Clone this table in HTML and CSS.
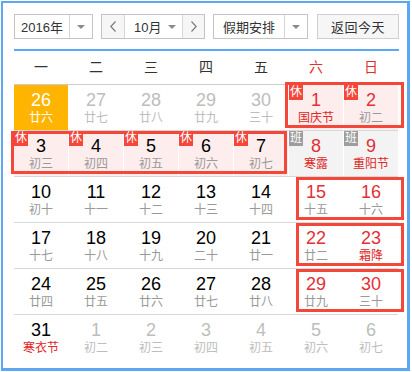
FILE: index.html
```html
<!DOCTYPE html>
<html lang="zh-CN">
<head>
<meta charset="utf-8">
<title>万年历</title>
<link rel="stylesheet" href="styles.css">
</head>
<body>
<div class="cal">
  <div class="toolbar">
    <div class="select year">
      <span class="sel-text">2016年</span>
      <span class="sel-arrow"><i class="tri"></i></span>
    </div>
    <div class="month-group">
      <span class="nav prev"><svg width="6" height="11" viewBox="0 0 6 11"><path d="M5.5 0.5 L0.8 5.5 L5.5 10.5" fill="none" stroke="#777" stroke-width="1.1"/></svg></span>
      <span class="month"><span class="month-text">10月</span><i class="tri"></i></span>
      <span class="nav next"><svg width="6" height="11" viewBox="0 0 6 11"><path d="M0.5 0.5 L5.2 5.5 L0.5 10.5" fill="none" stroke="#777" stroke-width="1.1"/></svg></span>
    </div>
    <div class="select holiday">
      <span class="sel-text">假期安排</span>
      <span class="sel-arrow"><i class="tri"></i></span>
    </div>
    <span class="today-btn">返回今天</span>
  </div>
  <div class="divider"></div>
  <div class="week-head">
    <span>一</span><span>二</span><span>三</span><span>四</span><span>五</span><span class="wk">六</span><span class="wk">日</span>
  </div>
  <div class="week">
    <div class="day today"><span class="num">26</span><span class="lunar">廿六</span></div>
    <div class="day other"><span class="num">27</span><span class="lunar">廿七</span></div>
    <div class="day other"><span class="num">28</span><span class="lunar">廿八</span></div>
    <div class="day other"><span class="num">29</span><span class="lunar">廿九</span></div>
    <div class="day other"><span class="num">30</span><span class="lunar">三十</span></div>
    <div class="grp g1">
      <div class="day rest red"><i class="badge">休</i><span class="num">1</span><span class="lunar fest">国庆节</span></div>
      <div class="day rest red"><i class="badge">休</i><span class="num">2</span><span class="lunar">初二</span></div>
    </div>
  </div>
  <div class="week">
    <div class="grp g2">
      <div class="day rest"><i class="badge">休</i><span class="num">3</span><span class="lunar">初三</span></div>
      <div class="day rest"><i class="badge">休</i><span class="num">4</span><span class="lunar">初四</span></div>
      <div class="day rest"><i class="badge">休</i><span class="num">5</span><span class="lunar">初五</span></div>
      <div class="day rest"><i class="badge">休</i><span class="num">6</span><span class="lunar">初六</span></div>
      <div class="day rest"><i class="badge">休</i><span class="num">7</span><span class="lunar">初七</span></div>
    </div>
    <div class="day work red"><i class="badge gray">班</i><span class="num">8</span><span class="lunar fest">寒露</span></div>
    <div class="day work red"><i class="badge gray">班</i><span class="num">9</span><span class="lunar fest">重阳节</span></div>
  </div>
  <div class="week">
    <div class="day"><span class="num">10</span><span class="lunar">初十</span></div>
    <div class="day"><span class="num">11</span><span class="lunar">十一</span></div>
    <div class="day"><span class="num">12</span><span class="lunar">十二</span></div>
    <div class="day"><span class="num">13</span><span class="lunar">十三</span></div>
    <div class="day"><span class="num">14</span><span class="lunar">十四</span></div>
    <div class="grp g3">
      <div class="day red"><span class="num">15</span><span class="lunar">十五</span></div>
      <div class="day red"><span class="num">16</span><span class="lunar">十六</span></div>
    </div>
  </div>
  <div class="week">
    <div class="day"><span class="num">17</span><span class="lunar">十七</span></div>
    <div class="day"><span class="num">18</span><span class="lunar">十八</span></div>
    <div class="day"><span class="num">19</span><span class="lunar">十九</span></div>
    <div class="day"><span class="num">20</span><span class="lunar">二十</span></div>
    <div class="day"><span class="num">21</span><span class="lunar">廿一</span></div>
    <div class="grp g3">
      <div class="day red"><span class="num">22</span><span class="lunar">廿二</span></div>
      <div class="day red"><span class="num">23</span><span class="lunar fest">霜降</span></div>
    </div>
  </div>
  <div class="week">
    <div class="day"><span class="num">24</span><span class="lunar">廿四</span></div>
    <div class="day"><span class="num">25</span><span class="lunar">廿五</span></div>
    <div class="day"><span class="num">26</span><span class="lunar">廿六</span></div>
    <div class="day"><span class="num">27</span><span class="lunar">廿七</span></div>
    <div class="day"><span class="num">28</span><span class="lunar">廿八</span></div>
    <div class="grp g3">
      <div class="day red"><span class="num">29</span><span class="lunar">廿九</span></div>
      <div class="day red"><span class="num">30</span><span class="lunar">三十</span></div>
    </div>
  </div>
  <div class="week last">
    <div class="day"><span class="num">31</span><span class="lunar fest">寒衣节</span></div>
    <div class="day other"><span class="num">1</span><span class="lunar">初二</span></div>
    <div class="day other"><span class="num">2</span><span class="lunar">初三</span></div>
    <div class="day other"><span class="num">3</span><span class="lunar">初四</span></div>
    <div class="day other"><span class="num">4</span><span class="lunar">初五</span></div>
    <div class="day other"><span class="num">5</span><span class="lunar">初六</span></div>
    <div class="day other"><span class="num">6</span><span class="lunar">初七</span></div>
  </div>
</div>
</body>
</html>
```

FILE: styles.css
```css
* { box-sizing: border-box; }

body {
  margin: 0;
  background: #fff;
  font-family: "Liberation Sans", "Noto Sans CJK SC", sans-serif;
  color: #333;
}

.cal {
  margin: 1px 0 0 1px;
  width: 409px;
  height: 370px;
  border-style: solid;
  border-color: #5da7f2;
  border-width: 2px 3px 3px 2px;
  padding: 11px 0 0 11px;
}

/* toolbar */
.toolbar {
  display: flex;
  height: 25px;
  width: 386px;
  font-size: 13px;
  color: #333;
  white-space: nowrap;
}

.select {
  display: flex;
  height: 25px;
  border: 1px solid #c4c4c4;
  background: #fff;
}

.year { width: 79px; margin-right: 8px; }
.year .sel-text { width: 55px; }
.holiday { width: 95px; margin-right: 9px; }
.holiday .sel-text { width: 71px; }

.sel-text {
  display: flex;
  align-items: center;
  justify-content: center;
  border-right: 1px solid #d6d6d6;
}

.sel-arrow {
  flex: 1;
  display: flex;
  align-items: center;
  justify-content: center;
}

.tri {
  display: block;
  flex-shrink: 0;
  width: 0;
  height: 0;
  border-left: 4px solid transparent;
  border-right: 4px solid transparent;
  border-top: 4px solid #8a8a8a;
}

.month-group {
  display: flex;
  width: 104px;
  height: 25px;
  margin-right: 8px;
  border: 1px solid #c4c4c4;
}

.nav {
  display: flex;
  align-items: center;
  justify-content: center;
  flex-shrink: 0;
  background: #f6f6f6;
}

.prev { width: 23px; border-right: 1px solid #d6d6d6; }
.next { width: 22px; border-left: 1px solid #d6d6d6; }

.month {
  flex: 1;
  display: flex;
  align-items: center;
  gap: 7px;
  padding-left: 9px;
  background: #fff;
  overflow: hidden;
}

.month-text { flex-shrink: 0; }

.today-btn {
  display: flex;
  align-items: center;
  justify-content: center;
  width: 82px;
  height: 25px;
  border: 1px solid #cfcfcf;
  background: #f6f6f6;
  letter-spacing: 0.5px;
}

.divider {
  width: 385px;
  height: 2px;
  margin-top: 10px;
  background: #5aa9f6;
}

/* week header */
.week-head {
  display: flex;
  gap: 1px;
  width: 384px;
  height: 34px;
  border-bottom: 1px solid #cccccc;
}

.week-head span {
  width: 54px;
  text-align: center;
  font-size: 14px;
  line-height: 33px;
  color: #333;
}

.week-head .wk { color: #e0302c; }

/* weeks */
.week {
  display: flex;
  gap: 1px;
  width: 384px;
  height: 46px;
  border-bottom: 1px solid #d8d8d8;
}

.week.last { border-bottom: none; }

.day {
  position: relative;
  width: 54px;
  height: 45px;
  padding-top: 5px;
  text-align: center;
}

.num {
  display: block;
  font-size: 18px;
  line-height: 20px;
  color: #000;
}

.lunar {
  display: block;
  font-size: 12px;
  line-height: 16px;
  color: #999;
}

.day.red .num { color: #e32f36; }
.lunar.fest { color: #e0261f; }

.day.other .num,
.day.other .lunar { color: #bdbdbd; }

.day.today { background: #ffb400; }
.day.today .num,
.day.today .lunar { color: #fff; }

.day.rest { background: #fdeded; }
.day.work { background: #f3f3f3; }

.badge {
  position: absolute;
  left: 0;
  top: 0;
  z-index: 2;
  width: 14px;
  height: 15px;
  font-style: normal;
  font-size: 12px;
  line-height: 15px;
  text-align: center;
  color: #fff;
  background: #f4473a;
}

.badge.gray { background: #9d9d9d; }

/* holiday groups */
.grp {
  position: relative;
  display: flex;
  gap: 1px;
}

.grp::after {
  content: "";
  position: absolute;
  border: 3px solid #f4473a;
  pointer-events: none;
}

.g1::after { top: -3px; bottom: 2px; left: -4px; right: -6px; }
.g2::after { top: 0; bottom: 2px; left: -3px; right: 1px; }
.g3::after { top: 0; bottom: 2px; left: 7px; right: -6px; }
```
